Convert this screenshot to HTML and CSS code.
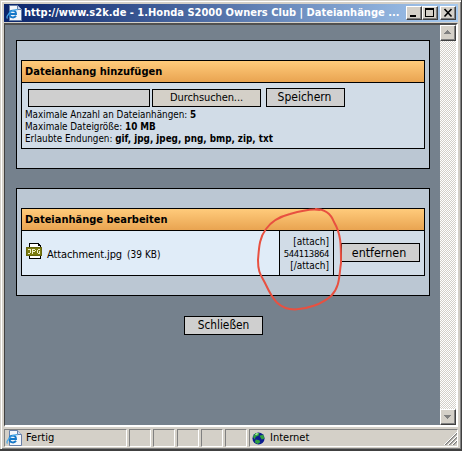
FILE: index.html
```html
<!DOCTYPE html>
<html lang="de">
<head>
<meta charset="utf-8">
<title>Dateianhänge verwalten</title>
<link rel="stylesheet" href="styles.css">
</head>
<body>
<svg width="0" height="0" class="defs">
  <symbol id="ie" viewBox="0 0 16 16">
    <path d="M3.500.5h8l4 4v11h-12z" fill="#f4f6fa" stroke="#6880a8"/>
    <path d="M11.500.5v4h4" fill="#c8d8f0" stroke="#6880a8"/>
    <path d="M3.500 9h6.500C10 4.500 3.500 4.500 3.500 9c0 4 5 4.300 6.500 1.800" fill="none" stroke="#1678c8" stroke-width="1.900"/>
    <path d="M1.500 13.500C-1 11 6.500 3.800 11.500 4.800" fill="none" stroke="#48a8e8" stroke-width="1.200"/>
  </symbol>
</svg>
<div class="window">
  <header class="titlebar">
    <svg class="icon"><use href="#ie"/></svg>
    <span class="title">http://www.s2k.de - 1.Honda S2000 Owners Club | Dateianhänge ...</span>
    <div class="controls">
      <span class="ctl"><svg width="14" height="12" shape-rendering="crispEdges"><path d="M3 8h6v2H3z"/></svg></span>
      <span class="ctl"><svg width="14" height="12" shape-rendering="crispEdges"><path d="M2 1h9v9H2zM3 3v6h7V3z" fill-rule="evenodd"/></svg></span>
      <span class="ctl close"><svg width="14" height="12"><path d="M3.500 2l7 7.500M10.500 2l-7 7.500" stroke="#000" stroke-width="1.600"/></svg></span>
    </div>
  </header>
  <div class="view">
    <main class="page">
      <section class="panel">
        <div class="box add">
          <h2>Dateianhang hinzufügen</h2>
          <div class="form">
            <div class="fields">
              <input class="file" aria-label="Datei">
              <button class="browse"><span>Durchsuchen...</span></button>
              <button class="btn save"><span>Speichern</span></button>
            </div>
            <p>Maximale Anzahl an Dateianhängen: <b>5</b></p>
            <p>Maximale Dateigröße: <b>10 MB</b></p>
            <p>Erlaubte Endungen: <b>gif, jpg, jpeg, png, bmp, zip, txt</b></p>
          </div>
        </div>
      </section>
      <section class="panel edit">
        <div class="box">
          <h2>Dateianhänge bearbeiten</h2>
          <div class="row">
            <div class="name">
              <svg class="jpg" width="17" height="17" shape-rendering="crispEdges">
                <path d="M3.500.5h9l2 2v13h-11z" fill="#fff" stroke="#000"/>
                <path d="M12.500.5v2h2" fill="none" stroke="#000"/>
                <path d="M.5 4.500h15v8H.5z" fill="#7c7c10" stroke="#66660c"/>
                <path d="M2 6h3v1H2zM4 7h1v3H4zM2 10h2v1H2zM6 6h3v1H6zM6 7h1v4H6zM9 7h1v1H9zM7 8h2v1H7zM12 6h2v1h-2zM11 7h1v3h-1zM12 10h2v1h-2zM13 8h1v2h-1z" fill="#f0f0c8"/>
              </svg>
              <span class="fname">Attachment.jpg</span><span class="size">(39 KB)</span>
            </div>
            <div class="code"><span>[attach]</span><span class="num">544113864</span><span>[/attach]</span></div>
            <div class="action"><button class="btn remove"><span>entfernen</span></button></div>
          </div>
        </div>
        <svg class="mark" width="90" height="108" viewBox="256 206 90 108"><path d="M320 210C312 208 300 211 290 214C278 217 271 222 266 229C259 238 259 249 258 260C258 273 261 275 266 285C273 300 279 309 295 309.500C308 309 322 304 331 296C340 287 339 276 341 263C341 244 341 234 334 222C331 214 326 209 315 209" fill="none" stroke="#e85040" stroke-width="2"/></svg>
      </section>
      <button class="btn quit"><span>Schließen</span></button>
    </main>
    <div class="scroll">
      <span class="arrow"><svg width="12" height="12" shape-rendering="crispEdges"><path d="M6 4h1v1h1v1h1v1h1v1H3V7h1V6h1V5h1z" fill="#808080"/></svg></span>
      <span class="arrow"><svg width="12" height="12" shape-rendering="crispEdges"><path d="M3 5h7v1H9v1H8v1H7v1H6V8H5V7H4V6H3z" fill="#808080"/></svg></span>
    </div>
  </div>
  <footer class="status">
    <div class="cell ready"><svg class="icon"><use href="#ie"/></svg><span>Fertig</span></div>
    <div class="cell"></div><div class="cell"></div><div class="cell"></div><div class="cell"></div><div class="cell"></div>
    <div class="cell zone">
      <svg width="13" height="13" viewBox="0 0 14 14"><circle cx="7" cy="7" r="6.500" fill="#0c1c90"/><path d="M1 5l3-4 4 0-1 3-3 1-1 3zM8 4l4-1 1.500 4-3 1zM4 8l4 1 1 2-3 2-3-2z" fill="#30a040"/><path d="M3 3l2-2 2 .5-2 2z" fill="#a0e890"/></svg>
      <span>Internet</span>
      <svg class="grip" width="14" height="14"><path d="M2 14L14 2M6 14l8-8M10 14l4-4" stroke="#808080" stroke-width="1.500"/><path d="M1 14L14 1M5 14l9-9M9 14l5-5" stroke="#fff"/></svg>
    </div>
  </footer>
</div>
</body>
</html>
```
FILE: styles.css
```css
* { box-sizing: border-box; }
body { margin: 0; background: #404040; font: 11px/12px "DejaVu Sans Condensed", "DejaVu Sans", sans-serif; font-stretch: condensed; color: #000; }
h2, p { margin: 0; }
svg { display: block; }
.defs { position: absolute; }
.icon { width: 16px; height: 16px; flex: none; }
span { white-space: nowrap; }
.window { width: 462px; height: 451px; padding: 4px 4px 0; background: #d4d0c8; border-right: 1px solid #404040; border-bottom: 2px solid #404040; box-shadow: inset 1px 1px #d4d0c8, inset 2px 2px #fff, inset -1px -1px #808080; }
.titlebar { display: flex; align-items: center; width: 454px; height: 18px; padding: 0 2px; background: linear-gradient(90deg, #0a246a, #a6caf0); color: #fff; font-weight: bold; }
.title { flex: 1; margin-left: 2px; letter-spacing: .01px; }
.controls { display: flex; }
.ctl { width: 16px; height: 14px; background: #d4d0c8; border: 1px solid; border-color: #fff #404040 #404040 #fff; box-shadow: inset -1px -1px #808080; }
.close { margin-left: 2px; }
.view { display: flex; height: 404px; margin-top: 1px; width: 454px; border: 2px solid; border-color: #505050 #fff #fff #404040; border-left-width: 1px; }
.page { width: 435px; padding: 15px 10px 0 11px; background: #75818d; }
.panel { width: 414px; height: 129px; padding: 19px 4px; background: #bbc7d3; border: 1px solid #000; }
.edit { position: relative; height: 108px; margin-top: 19px; }
.box { height: 68px; border: 1px solid #000; background: #d1dce7; }
.add { height: 89px; }
h2 { height: 22px; padding: 0 3px; border-bottom: 1px solid #000; background: linear-gradient(#ffcb7b, #e9a451); font-size: 11px; line-height: 22px; }
.form { padding: 5px 3px; font-size: 9.800px; }
.fields { display: flex; align-items: flex-end; height: 19px; margin: 0 0 2px 3px; }
input, button { margin: 0; padding: 0; border: 1px solid #000; border-radius: 0; font: inherit; color: #000; background: #cfcfcf; text-align: center; }
.file { width: 122px; height: 18px; }
.browse { width: 109px; height: 18px; margin: 0 5px 0 2px; background: #d4d0c8; font-size: 11px; letter-spacing: -.1px; }
.btn { width: 79px; height: 19px; font-size: 12px; line-height: 17px; }
.save { padding-right: 2px; }
.remove { padding-right: 3px; font-size: 12.400px; }
.row { display: flex; height: 44px; }
.name { display: flex; width: 257px; padding: 12px 0 0 4px; background: #e0ecf8; }
.fname { margin: 6px 0 0 4px; letter-spacing: -.1px; }
.size { margin: 6px 0 0 5px; font-size: 10px; }
.code { display: flex; flex-direction: column; align-items: flex-end; width: 55px; padding: 5px 4px 0 0; border: solid #000; border-width: 0 1px; font-size: 10px; }
.num { font-size: 9.500px; letter-spacing: -.4px; }
.action { padding: 12px 0 0 7px; }
.mark { position: absolute; left: 239px; top: 17px; pointer-events: none; }
.quit { display: block; margin: 20px 0 0 168px; font-size: 11.800px; }
.scroll { display: flex; flex-direction: column; justify-content: space-between; width: 16px; background: repeating-conic-gradient(#fff 0 25%, #d4d0c8 0 50%) 0 0 / 2px 2px; }
.arrow { width: 16px; height: 16px; background: #d4d0c8; border: 1px solid; border-color: #fff #404040 #404040 #fff; box-shadow: inset -1px -1px #808080; }
.status { display: flex; gap: 2px; width: 454px; height: 18px; margin-top: 2px; }
.cell { display: flex; align-items: center; width: 22px; border: 1px solid; border-color: #808080 #fff #fff #808080; }
.ready { width: 123px; gap: 4px; padding-left: 1px; }
.zone { flex: 1; gap: 5px; padding-left: 2px; }
.grip { margin-left: auto; }
```
